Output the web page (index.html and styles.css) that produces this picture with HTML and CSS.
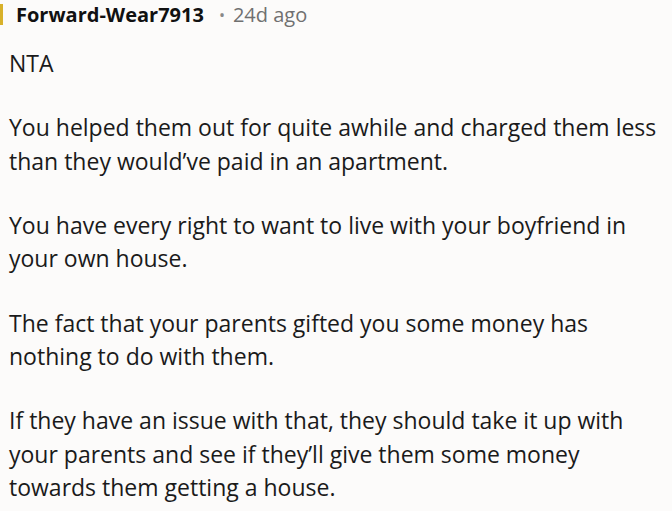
FILE: index.html
```html
<!DOCTYPE html>
<html>
<head>
<meta charset="utf-8">
<link rel="stylesheet" href="styles.css">
</head>
<body>
<div class="comment">
  <div class="meta">
    <span class="avatar"></span>
    <span class="author">Forward-Wear7913</span>
    <span class="dot">•</span>
    <span class="time">24d ago</span>
  </div>
  <div class="body">
    <p>NTA</p>
    <p>You helped them out for quite awhile and charged them less than they would’ve paid in an apartment.</p>
    <p>You have every right to want to live with your boyfriend in your own house.</p>
    <p>The fact that your parents gifted you some money has nothing to do with them.</p>
    <p>If they have an issue with that, they should take it up with your parents and see if they’ll give them some money towards them getting a house.</p>
  </div>
</div>
</body>
</html>
```
FILE: styles.css
```css
html, body {
  margin: 0;
  padding: 0;
  background: #fcfbfa;
}
.comment {
  font-family: "Open Sans", "Noto Sans", sans-serif;
  color: #1a1a1a;
}
.meta {
  display: flex;
  align-items: center;
  height: 29px;
  font-size: 20px;
}
.avatar {
  width: 3px;
  height: 21px;
  background: #d8b12a;
  margin-right: 13px;
}
.author {
  font-weight: 700;
  color: #111;
}
.dot {
  color: #888;
  font-size: 16px;
  margin: 0 8px 0 15px;
}
.time {
  color: #707070;
}
.body {
  padding: 0 2px 0 9px;
  font-size: 23px;
  line-height: 33.35px;
}
.body p {
  margin: 18px 0 31px;
}
.body p + p {
  margin-top: 0;
}
```
